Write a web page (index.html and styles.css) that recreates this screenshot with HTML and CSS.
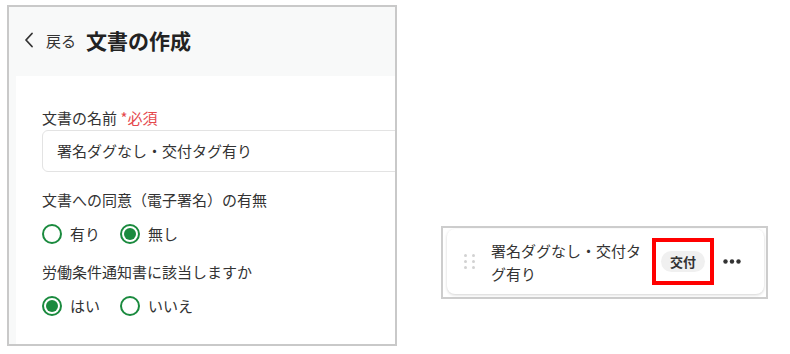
FILE: index.html
```html
<!DOCTYPE html>
<html lang="ja">
<head>
    <meta charset="UTF-8">
    <meta name="viewport" content="width=device-width, initial-scale=1.0">
    <title>文書の作成</title>
    <link rel="stylesheet" href="styles.css">
</head>
<body>
    <div class="panel">
        <div class="header">
            <svg class="back-icon" width="10" height="16" viewBox="0 0 10 16">
                <path d="M8 1.5 L2 8 L8 14.5" fill="none" stroke="#333" stroke-width="1.8" stroke-linecap="round" stroke-linejoin="round"/>
            </svg>
            <span class="back-text">戻る</span>
            <h1>文書の作成</h1>
        </div>
        <div class="form">
            <div class="label">文書の名前 <span class="required">*必須</span></div>
            <div class="input">署名ダグなし・交付タグ有り</div>

            <div class="label gap">文書への同意（電子署名）の有無</div>
            <div class="radios">
                <label class="radio"><span class="circle"></span>有り</label>
                <label class="radio"><span class="circle checked"></span>無し</label>
            </div>

            <div class="label gap">労働条件通知書に該当しますか</div>
            <div class="radios">
                <label class="radio"><span class="circle checked"></span>はい</label>
                <label class="radio"><span class="circle"></span>いいえ</label>
            </div>
        </div>
    </div>

    <div class="preview">
        <div class="card">
            <svg class="handle" width="11" height="15" viewBox="0 0 11 15">
                <circle cx="1.5" cy="1.5" r="1.5" fill="#d2d2d2"/>
                <circle cx="9.5" cy="1.5" r="1.5" fill="#d2d2d2"/>
                <circle cx="1.5" cy="7.5" r="1.5" fill="#d2d2d2"/>
                <circle cx="9.5" cy="7.5" r="1.5" fill="#d2d2d2"/>
                <circle cx="1.5" cy="13.5" r="1.5" fill="#d2d2d2"/>
                <circle cx="9.5" cy="13.5" r="1.5" fill="#d2d2d2"/>
            </svg>
            <div class="card-title">署名ダグなし・交付タグ有り</div>
            <span class="highlight"><span class="chip">交付</span></span>
            <svg class="more" width="18" height="5" viewBox="0 0 18 5">
                <circle cx="2.5" cy="2.5" r="2.2" fill="#333"/>
                <circle cx="9" cy="2.5" r="2.2" fill="#333"/>
                <circle cx="15.5" cy="2.5" r="2.2" fill="#333"/>
            </svg>
        </div>
    </div>
</body>
</html>
```

FILE: styles.css
```css
body {
    margin: 0;
    padding: 5px 0 0 7px;
    display: flex;
    align-items: flex-start;
    background: #fff;
    color: #333;
    font-family: "Noto Sans CJK JP", "Noto Sans", sans-serif;
}
.panel {
    width: 386px;
    height: 337px;
    border: 2px solid #c9c9c9;
    background: #f8f9f9;
    overflow: hidden;
}
.header {
    height: 66px;
    padding: 0 0 3px 15px;
    display: flex;
    align-items: center;
}
.back-icon {
    margin-right: 12px;
}
.back-text {
    font-size: 15px;
    margin-right: 10px;
}
.header h1 {
    margin: 0;
    font-size: 21px;
    font-weight: bold;
    color: #222;
}
.form {
    margin-left: 7px;
    width: 480px;
    height: 300px;
    background: #fff;
    padding: 32px 26px;
}
.label {
    font-size: 15px;
    line-height: 20px;
    margin-bottom: 2px;
}
.label.gap {
    margin-top: 18px;
}
.required {
    color: #e5484d;
}
.input {
    height: 40px;
    border: 1px solid #e3e3e3;
    border-radius: 6px;
    padding: 0 14px;
    font-size: 15px;
    line-height: 40px;
}
.radios {
    display: flex;
    gap: 20px;
    margin-top: 14px;
}
.radio {
    display: flex;
    align-items: center;
    gap: 8px;
    font-size: 15px;
    line-height: 20px;
}
.circle {
    width: 16px;
    height: 16px;
    border: 2px solid #1a8a3e;
    border-radius: 50%;
    display: flex;
    align-items: center;
    justify-content: center;
}
.circle.checked::after {
    content: "";
    width: 12px;
    height: 12px;
    border-radius: 50%;
    background: #1a8a3e;
}
.preview {
    margin: 221px 0 0 44px;
    width: 317px;
    height: 65px;
    border: 2px solid #cdcdcd;
    padding: 1px 2px 3px 4px;
}
.card {
    height: 100%;
    background: #fff;
    border-radius: 8px;
    box-shadow: 0 1px 3px rgba(0, 0, 0, 0.18);
    display: flex;
    align-items: center;
    padding-left: 17px;
}
.handle {
    margin-right: 16px;
}
.card-title {
    width: 155px;
    font-size: 15px;
    line-height: 23px;
    margin-right: 6px;
}
.highlight {
    border: 4px solid #ff0000;
    padding: 9px 5px;
    display: flex;
}
.chip {
    background: #f0f0f0;
    border-radius: 11px;
    padding: 0 9px;
    font-size: 13px;
    font-weight: bold;
    line-height: 21px;
}
.more {
    margin-left: 9px;
}
```
